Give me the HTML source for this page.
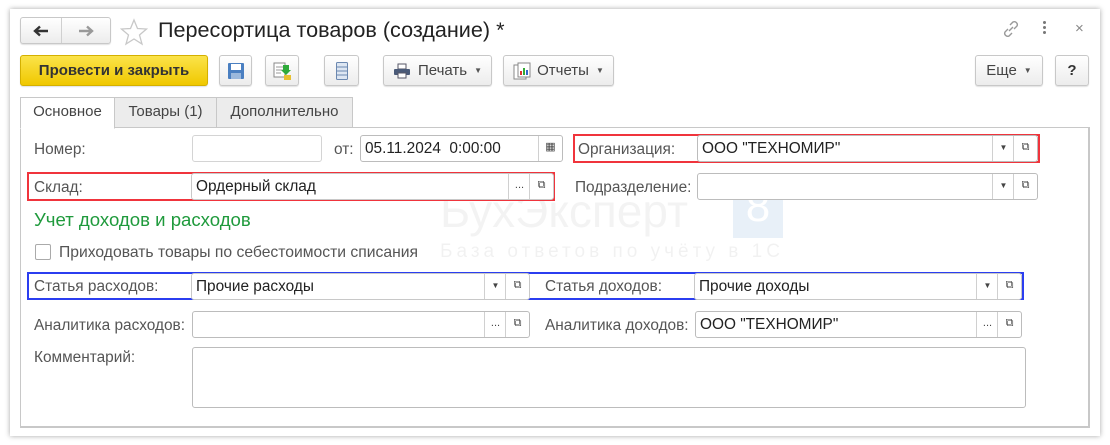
<!DOCTYPE html>
<html><head><meta charset="utf-8"><style>
*{box-sizing:border-box;margin:0;padding:0}
body{width:1110px;height:445px;background:#fff;font-family:"Liberation Sans",Arial,sans-serif;font-size:15.4px;color:#333;position:relative;overflow:hidden}
.a{position:absolute}
.frame{left:10px;top:9px;width:1090px;height:427px;background:#fff;box-shadow:0 0 5px rgba(0,0,0,.35)}
.btn{position:absolute;border:1px solid #c8c8c8;border-radius:3px;background:linear-gradient(#fff,#ececec);box-shadow:0 1px 1px rgba(0,0,0,.12);font-size:15px;color:#444;display:flex;align-items:center;justify-content:center}
.inp{position:absolute;border:1px solid #bcbcbc;border-radius:3px;background:#fff;height:27px;font-size:15.4px;color:#222;line-height:26px;padding-left:4px;white-space:nowrap}
.sb{position:absolute;top:0;height:25px;width:22px;border-left:1px solid #d0d0d0;font-size:11px;color:#444;text-align:center;line-height:23px}
.lbl{position:absolute;font-size:15.4px;color:#555;white-space:nowrap;margin-top:1px}
.red{position:absolute;border:2px solid #f0343c}
.blue{position:absolute;border:2px solid #2b3ef0}
.tab{position:absolute;top:97px;height:31px;border:1px solid #c8c8c8;background:#ececec;font-size:15px;color:#444;line-height:28px;text-align:center}
.arr{font-size:8px;color:#555;margin-left:7px}
</style></head><body>
<div class="a frame"></div>
<div class="btn" style="left:20px;top:17px;width:91px;height:27px;justify-content:flex-start">
 <span style="width:41px;height:25px;border-right:1px solid #d0d0d0;display:flex;align-items:center;justify-content:center"><svg width="16" height="12" viewBox="0 0 16 12"><path d="M15 6H3M7 1.5L2 6l5 4.5" fill="none" stroke="#333" stroke-width="2.4"/></svg></span>
 <span style="width:49px;display:flex;align-items:center;justify-content:center"><svg width="16" height="12" viewBox="0 0 16 12"><path d="M1 6h12M9 1.5L14 6l-5 4.5" fill="none" stroke="#999" stroke-width="2.4"/></svg></span>
</div>
<svg class="a" style="left:119px;top:18px" width="30" height="28" viewBox="0 0 30 28"><polygon points="15,2 18.5,10.5 27.5,11 20.5,17 23,26 15,21 7,26 9.5,17 2.5,11 11.5,10.5" fill="none" stroke="#c8c8c8" stroke-width="1.3"/></svg>
<div class="a" style="left:158px;top:17px;font-size:21.6px;color:#222">Пересортица товаров (создание) *</div>
<svg class="a" style="left:1001px;top:19px" width="20" height="20" viewBox="0 0 20 20"><g fill="none" stroke="#999" stroke-width="1.4"><path d="M9 6l3-3a3 3 0 014 4l-3 3"/><path d="M11 14l-3 3a3 3 0 01-4-4l3-3"/><path d="M8 12l4-4"/></g></svg>
<div class="a" style="left:1043px;top:21px;width:3px"><div style="width:3px;height:3px;background:#777;border-radius:2px;margin-bottom:2px"></div><div style="width:3px;height:3px;background:#777;border-radius:2px;margin-bottom:2px"></div><div style="width:3px;height:3px;background:#777;border-radius:2px"></div></div>
<div class="a" style="left:1075px;top:20px;font-size:15px;color:#888">×</div>
<div class="btn" style="left:20px;top:55px;width:188px;height:31px;background:linear-gradient(#fbe34a,#f0c800);border-color:#d4b000;font-weight:bold;color:#333;font-size:15px">Провести и закрыть</div>
<div class="btn" style="left:219px;top:55px;width:33px;height:31px"><svg width="18" height="18" viewBox="0 0 18 18"><rect x="1" y="1" width="16" height="16" rx="1" fill="#4a7fc1"/><rect x="4" y="2" width="10" height="6" fill="#fff"/><rect x="4" y="11" width="10" height="6" fill="#9bb8dc"/></svg></div>
<div class="btn" style="left:265px;top:55px;width:34px;height:31px"><svg width="20" height="20" viewBox="0 0 20 20"><rect x="2" y="2" width="11" height="14" fill="#fff" stroke="#888"/><path d="M4 6h7M4 9h7M4 12h5" stroke="#999"/><path d="M11 4h6v5h2l-5 5-5-5h2z" fill="#2eaa3a"/><rect x="12" y="14" width="7" height="5" fill="#e8c030"/></svg></div>
<div class="btn" style="left:324px;top:55px;width:35px;height:31px"><svg width="12" height="18" viewBox="0 0 12 18"><rect x="0.5" y="0.5" width="11" height="17" rx="1" fill="#dde6f2" stroke="#6b88b0"/><path d="M1 5h10M1 9h10M1 13h10" stroke="#6b88b0"/></svg></div>
<div class="btn" style="left:383px;top:55px;width:109px;height:31px"><svg width="18" height="16" viewBox="0 0 18 16" style="margin-right:7px"><rect x="5" y="1" width="8" height="5" fill="#fff" stroke="#556"/><rect x="1" y="6" width="16" height="6" rx="1" fill="#4a5a78"/><rect x="5" y="10" width="8" height="5" fill="#fff" stroke="#556"/></svg>Печать<span class="arr">▼</span></div>
<div class="btn" style="left:503px;top:55px;width:111px;height:31px"><svg width="18" height="18" viewBox="0 0 18 18" style="margin-right:6px"><rect x="1" y="3" width="12" height="14" fill="#fff" stroke="#888"/><rect x="5" y="1" width="12" height="14" fill="#fff" stroke="#888"/><rect x="7" y="9" width="2" height="4" fill="#d33"/><rect x="10" y="6" width="2" height="7" fill="#3a3"/><rect x="13" y="8" width="2" height="5" fill="#36c"/></svg>Отчеты<span class="arr">▼</span></div>
<div class="btn" style="left:975px;top:55px;width:68px;height:31px">Еще<span class="arr">▼</span></div>
<div class="btn" style="left:1055px;top:55px;width:34px;height:31px;font-weight:bold;color:#333">?</div>
<div class="a" style="left:20px;top:127px;width:1070px;height:301px;border:1px solid #c8c8c8;border-right-width:2px;border-bottom-width:2px"></div>
<div class="tab" style="left:20px;width:95px;background:#fff;border-bottom-color:#fff;height:32px">Основное</div>
<div class="tab" style="left:114px;width:103px">Товары (1)</div>
<div class="tab" style="left:216px;width:137px">Дополнительно</div>
<div class="a" style="left:440px;top:184px;font-size:46px;color:#000;opacity:.045">БухЭксперт</div>
<div class="a" style="left:733px;top:182px;width:50px;height:56px;background:#c8dcef;opacity:.4;color:#fff;font-size:44px;text-align:center">8</div>
<div class="a" style="left:440px;top:241px;font-size:19px;letter-spacing:4px;color:#000;opacity:.05">База ответов по учёту в 1С</div>
<div class="lbl" style="left:34px;top:140px">Номер:</div>
<div class="inp" style="left:192px;top:135px;width:130px;border-color:#d4d4d4"></div>
<div class="lbl" style="left:334px;top:140px">от:</div>
<div class="inp" style="left:360px;top:135px;width:203px">05.11.2024&nbsp; 0:00:00<div class="sb" style="right:0;width:24px">▦</div></div>
<div class="red" style="left:573px;top:134px;width:467px;height:29px"></div>
<div class="lbl" style="left:578px;top:140px">Организация:</div>
<div class="inp" style="left:697px;top:135px;width:341px">ООО "ТЕХНОМИР"<div class="sb" style="right:23px;font-size:8px">▼</div><div class="sb" style="right:0;width:24px">⧉</div></div>
<div class="red" style="left:27px;top:172px;width:528px;height:29px"></div>
<div class="lbl" style="left:34px;top:178px">Склад:</div>
<div class="inp" style="left:191px;top:173px;width:363px;border-color:#c8c8c8">Ордерный склад<div class="sb" style="right:23px">...</div><div class="sb" style="right:0;width:24px">⧉</div></div>
<div class="lbl" style="left:575px;top:178px">Подразделение:</div>
<div class="inp" style="left:697px;top:173px;width:341px"><div class="sb" style="right:23px;font-size:8px">▼</div><div class="sb" style="right:0;width:24px">⧉</div></div>
<div class="a" style="left:34px;top:209px;font-size:18.6px;color:#1f9a3c">Учет доходов и расходов</div>
<div class="a" style="left:35px;top:244px;width:16px;height:16px;border:1px solid #aaa;border-radius:2px"></div>
<div class="lbl" style="left:59px;top:243px;font-size:15.7px">Приходовать товары по себестоимости списания</div>
<div class="blue" style="left:27px;top:272px;width:997px;height:28px"></div>
<div class="lbl" style="left:34px;top:277px">Статья расходов:</div>
<div class="inp" style="left:191px;top:273px;width:339px;border-color:#c8c8c8">Прочие расходы<div class="sb" style="right:23px;font-size:8px">▼</div><div class="sb" style="right:0;width:24px">⧉</div></div>
<div class="lbl" style="left:545px;top:277px">Статья доходов:</div>
<div class="inp" style="left:694px;top:273px;width:328px;border-color:#c8c8c8">Прочие доходы<div class="sb" style="right:23px;font-size:8px">▼</div><div class="sb" style="right:0;width:24px">⧉</div></div>
<div class="lbl" style="left:34px;top:316px">Аналитика расходов:</div>
<div class="inp" style="left:192px;top:311px;width:338px"><div class="sb" style="right:23px">...</div><div class="sb" style="right:0;width:24px">⧉</div></div>
<div class="lbl" style="left:545px;top:316px">Аналитика доходов:</div>
<div class="inp" style="left:695px;top:311px;width:327px">ООО "ТЕХНОМИР"<div class="sb" style="right:23px">...</div><div class="sb" style="right:0;width:24px">⧉</div></div>
<div class="lbl" style="left:34px;top:348px">Комментарий:</div>
<div class="inp" style="left:192px;top:347px;width:834px;height:61px"></div>
</body></html>
